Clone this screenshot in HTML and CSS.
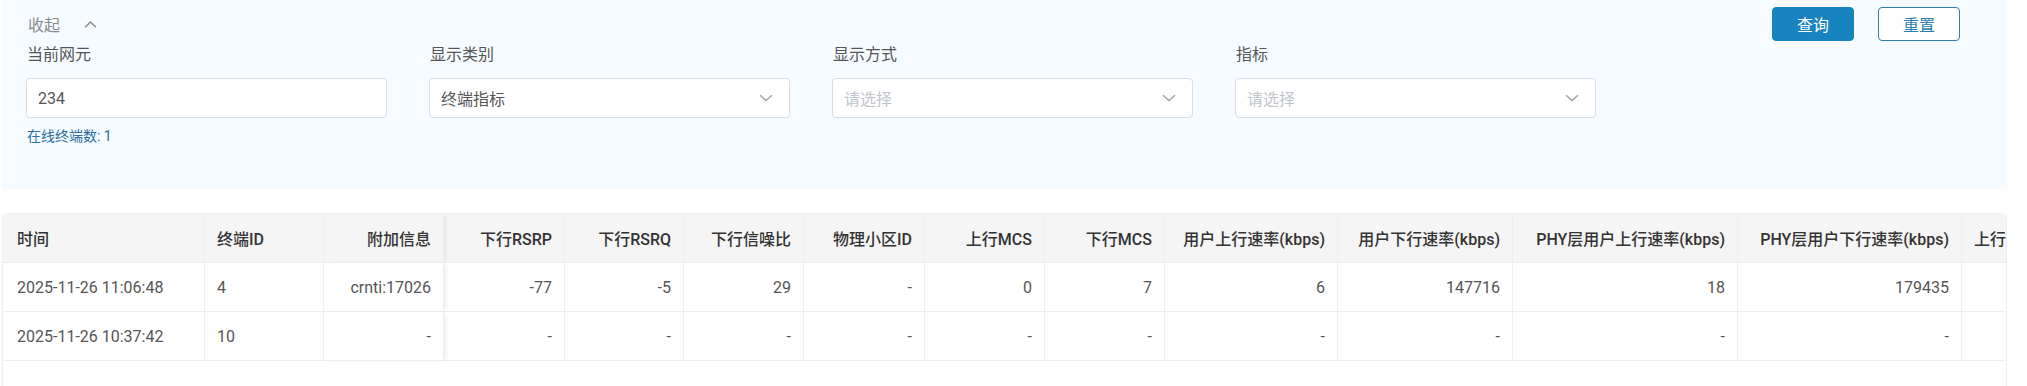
FILE: index.html
```html
<!doctype html>
<html>
<head>
<meta charset="utf-8">
<title>终端指标</title>
<link rel="stylesheet" href="styles.css">
</head>
<body>
<div class="page">
	<div class="filter">
		<div class="filter-top">
			<span class="fold">收起<svg width="13" height="7" viewBox="0 0 13 7"><path d="M1 6.2L6.5 1L12 6.2" fill="none" stroke="#8c8c8c" stroke-width="1.5"/></svg></span>
			<div class="btns">
				<button class="btn btn-primary">查询</button>
				<button class="btn btn-plain">重置</button>
			</div>
		</div>
		<div class="fields">
			<div class="field">
				<div class="label">当前网元</div>
				<div class="input">234</div>
				<div class="hint">在线终端数: 1</div>
			</div>
			<div class="field">
				<div class="label">显示类别</div>
				<div class="input select"><span>终端指标</span><svg width="14" height="8" viewBox="0 0 14 8"><path d="M1 1.2L7 6.6L13 1.2" fill="none" stroke="#a3a3a3" stroke-width="1.5"/></svg></div>
			</div>
			<div class="field">
				<div class="label">显示方式</div>
				<div class="input select"><span class="ph">请选择</span><svg width="14" height="8" viewBox="0 0 14 8"><path d="M1 1.2L7 6.6L13 1.2" fill="none" stroke="#a3a3a3" stroke-width="1.5"/></svg></div>
			</div>
			<div class="field">
				<div class="label">指标</div>
				<div class="input select"><span class="ph">请选择</span><svg width="14" height="8" viewBox="0 0 14 8"><path d="M1 1.2L7 6.6L13 1.2" fill="none" stroke="#a3a3a3" stroke-width="1.5"/></svg></div>
			</div>
		</div>
	</div>

	<div class="grid-wrap">
		<table class="grid">
			<colgroup>
				<col style="width:202px"><col style="width:119px"><col style="width:120px"><col style="width:121px">
				<col style="width:119px"><col style="width:120px"><col style="width:121px"><col style="width:120px">
				<col style="width:120px"><col style="width:173px"><col style="width:175px"><col style="width:225px">
				<col style="width:224px"><col style="width:120px">
			</colgroup>
			<thead>
				<tr>
					<th class="tl">时间</th><th class="tl">终端ID</th><th class="fix">附加信息</th><th>下行RSRP</th>
					<th>下行RSRQ</th><th>下行信噪比</th><th>物理小区ID</th><th>上行MCS</th>
					<th>下行MCS</th><th>用户上行速率(kbps)</th><th>用户下行速率(kbps)</th><th>PHY层用户上行速率(kbps)</th>
					<th>PHY层用户下行速率(kbps)</th><th class="tl">上行</th>
				</tr>
			</thead>
			<tbody>
				<tr>
					<td class="tl">2025-11-26 11:06:48</td><td class="tl">4</td><td class="fix">crnti:17026</td><td>-77</td>
					<td>-5</td><td>29</td><td>-</td><td>0</td>
					<td>7</td><td>6</td><td>147716</td><td>18</td>
					<td>179435</td><td></td>
				</tr>
				<tr>
					<td class="tl">2025-11-26 10:37:42</td><td class="tl">10</td><td class="fix">-</td><td>-</td>
					<td>-</td><td>-</td><td>-</td><td>-</td>
					<td>-</td><td>-</td><td>-</td><td>-</td>
					<td>-</td><td></td>
				</tr>
			</tbody>
		</table>
	</div>
</div>
</body>
</html>
```

FILE: styles.css
```css
*{box-sizing:border-box;}
html,body{margin:0;padding:0;height:100%;overflow:hidden;background:#fff;}
body{font-family:Roboto,"Noto Sans CJK SC",sans-serif;font-size:16px;color:#555;}
.page{padding:0 20px 0 2px;}

/* 查询条件 */
.filter{background:#f6fbff;padding:7px 47px 43px 24px;}
.filter-top{display:flex;align-items:center;justify-content:space-between;height:34px;}
.fold{display:flex;align-items:center;gap:24px;color:#8a8a8a;font-size:16px;padding-left:2px;}
.btns{display:flex;gap:24px;}
.btn{width:82px;height:34px;border-radius:4px;font-family:inherit;font-size:16px;cursor:pointer;padding:0;}
.btn-primary{background:#1783bf;border:1px solid #1783bf;color:#fff;}
.btn-plain{background:#fff;border:1px solid #2c7db0;color:#2c7db0;}
.fields{display:grid;grid-template-columns:repeat(4,361px);column-gap:42px;margin-top:3px;}
.label{line-height:22px;color:#555;padding-left:1px;}
.input{margin-top:12px;height:40px;background:#fff;border:1px solid #d9dce2;border-radius:4px;display:flex;align-items:center;padding:0 16px 0 11px;color:#555;}
.select{justify-content:space-between;}
.ph{color:#c0c4cc;}
.hint{margin-top:8px;font-size:14px;line-height:20px;color:#2a6ea3;padding-left:1px;}

/* 表格 */
.grid-wrap{margin-top:24px;height:173px;border:1px solid #ebeef5;border-bottom:none;border-radius:6px 6px 0 0;overflow:hidden;}
.grid{border-collapse:separate;border-spacing:0;table-layout:fixed;width:2079px;}
.grid th,.grid td{height:49px;padding:0 12px;text-align:right;white-space:nowrap;overflow:hidden;border-right:1px solid #ebeef5;border-bottom:1px solid #ebeef5;}
.grid th{background:#f5f5f5;color:#333;font-weight:500;}
.grid td{background:#fff;color:#555;}
.grid th:first-child,.grid td:first-child{padding-left:14px;}
.grid .tl{text-align:left;}
.grid .fix{position:relative;z-index:1;box-shadow:3px 0 5px -2px rgba(0,0,0,.10);}
```
